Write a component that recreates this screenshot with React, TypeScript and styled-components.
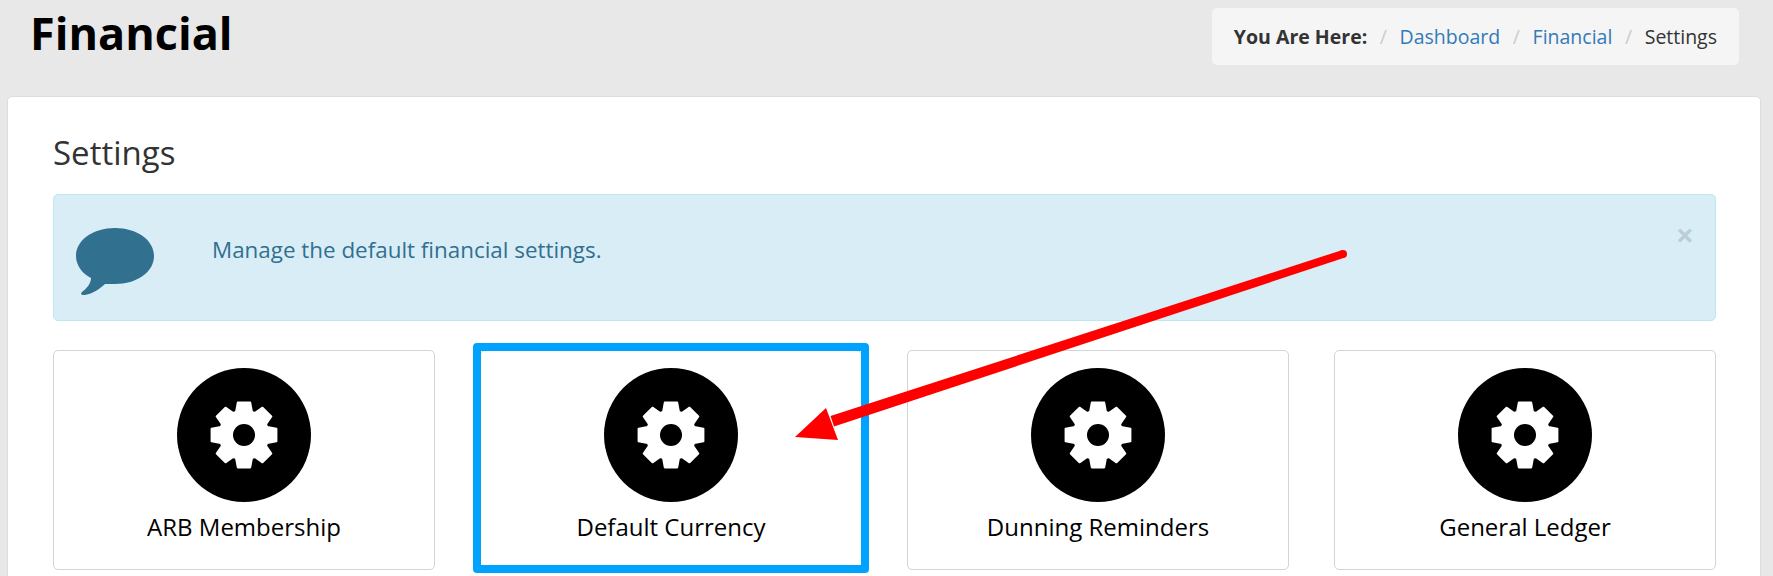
import React from 'react'
import styled, { createGlobalStyle } from 'styled-components'

const GlobalStyle = createGlobalStyle`
  html, body {
    margin: 0;
    height: 100%;
    overflow: hidden;
    background: #e8e8e8;
    font-family: "Open Sans", "Liberation Sans", sans-serif;
  }
  * { box-sizing: border-box; }
`

const Page = styled.div`
  position: relative;
  width: 1773px;
  height: 576px;
  overflow: hidden;
  padding: 8px 34px 0 7px;
`

const Header = styled.header`
  display: flex;
  justify-content: space-between;
  align-items: flex-start;
  height: 88px;
`

const PageTitle = styled.h1`
  margin: 0;
  padding-left: 23px;
  color: #000;
  font-size: 45px;
  font-weight: 700;
  line-height: 50px;
`

const Breadcrumb = styled.nav`
  display: flex;
  align-items: center;
  height: 57px;
  padding: 0 22px;
  background: #f5f5f5;
  border-radius: 5px;
  font-size: 19.5px;
  color: #333;
`

const CrumbLabel = styled.strong`
  font-weight: 700;
`

const CrumbLink = styled.a`
  color: #337ab7;
  text-decoration: none;
`

const CrumbDivider = styled.span`
  padding: 0 12.6px;
  color: #ccc;
`

const Panel = styled.main`
  height: 560px;
  margin-right: -22px;
  padding: 36px 44px 0 45px;
  background: #fff;
  border: 1px solid #ddd;
  border-radius: 5px;
`

const PanelTitle = styled.h2`
  margin: 0 0 21px;
  color: #333;
  font-size: 33px;
  font-weight: 400;
  line-height: 40px;
`

const Alert = styled.div`
  display: flex;
  align-items: flex-start;
  height: 127px;
  margin-bottom: 29px;
  padding: 33px 21px 0 21px;
  color: #31708f;
  background: #d9edf7;
  border: 1px solid #bce8f1;
  border-radius: 5px;
`

const AlertText = styled.p`
  margin: 7px 0 0 57px;
  font-size: 22.4px;
  line-height: 29px;
`

const CloseButton = styled.span`
  margin-left: auto;
  margin-top: -5px;
  color: #000;
  opacity: 0.13;
  font-size: 32px;
  font-weight: 700;
  line-height: 24px;
`

const CardGrid = styled.div`
  display: grid;
  grid-template-columns: repeat(4, 382px);
  justify-content: space-between;
`

const Card = styled.a<{ $highlighted?: boolean }>`
  position: relative;
  display: flex;
  flex-direction: column;
  align-items: center;
  height: 220px;
  padding-top: 17px;
  color: #000;
  background: #fff;
  border: 1px solid #d4d4d4;
  border-radius: 5px;
  font-size: 24px;
  line-height: 30px;

  ${(props) =>
    props.$highlighted &&
    `
    &::after {
      content: '';
      position: absolute;
      inset: -8px -8px -4px -8px;
      border: 8px solid #00a2ff;
      border-radius: 4px;
    }
  `}
`

const IconCircle = styled.span`
  display: flex;
  align-items: center;
  justify-content: center;
  width: 134px;
  height: 134px;
  margin-bottom: 10px;
  background: #000;
  border-radius: 50%;
`

const ArrowLayer = styled.svg`
  position: absolute;
  top: 0;
  left: 0;
  pointer-events: none;
`

// 8 teeth, tapered from the root circle out to the tip
const gearPath = () => {
  const points: string[] = []
  for (let i = 0; i < 8; i++) {
    const angle = (i * Math.PI) / 4 - Math.PI / 2
    const corners: [number, number][] = [
      [24.5, -0.33],
      [33, -0.19],
      [33, 0.19],
      [24.5, 0.33],
    ]
    corners.forEach(([radius, offset]) => {
      const x = 35 + radius * Math.cos(angle + offset)
      const y = 35 + radius * Math.sin(angle + offset)
      points.push(`${x.toFixed(2)} ${y.toFixed(2)}`)
    })
  }
  return `M${points.join('L')}Z`
}

const GearIcon = () => (
  <svg width="70" height="70" viewBox="0 0 70 70">
    <path
      d={gearPath()}
      fill="#fff"
      stroke="#fff"
      strokeWidth="2"
      strokeLinejoin="round"
    />
    <circle cx="35" cy="35" r="11" fill="#000" />
  </svg>
)

const BubbleIcon = () => (
  <svg width="80" height="68" viewBox="0 0 80 68" style={{ flexShrink: 0 }}>
    <path
      d="M40 0C18 0 1 12 1 28C1 38 8 46 16 50C16 56 11 61 7 64C5 66 7 67.5 10 67C18 65.5 24 61.5 30 56C33 56 37 56 40 56C62 56 79 44 79 28C79 12 62 0 40 0Z"
      fill="#31708f"
    />
  </svg>
)

const cards = [
  { label: 'ARB Membership' },
  { label: 'Default Currency', highlighted: true },
  { label: 'Dunning Reminders' },
  { label: 'General Ledger' },
]

export default function App() {
  return (
    <Page>
      <GlobalStyle />
      <Header>
        <PageTitle>Financial</PageTitle>
        <Breadcrumb>
          <CrumbLabel>You Are Here:</CrumbLabel>
          <CrumbDivider>/</CrumbDivider>
          <CrumbLink href="#">Dashboard</CrumbLink>
          <CrumbDivider>/</CrumbDivider>
          <CrumbLink href="#">Financial</CrumbLink>
          <CrumbDivider>/</CrumbDivider>
          <span>Settings</span>
        </Breadcrumb>
      </Header>
      <Panel>
        <PanelTitle>Settings</PanelTitle>
        <Alert>
          <BubbleIcon />
          <AlertText>Manage the default financial settings.</AlertText>
          <CloseButton>×</CloseButton>
        </Alert>
        <CardGrid>
          {cards.map((card) => (
            <Card key={card.label} $highlighted={card.highlighted}>
              <IconCircle>
                <GearIcon />
              </IconCircle>
              {card.label}
            </Card>
          ))}
        </CardGrid>
      </Panel>
      <ArrowLayer width="1773" height="576" viewBox="0 0 1773 576">
        <path d="M1341.7 250.2L1344.3 257.8L834 426.5L830.5 416Z" fill="#f00" />
        <circle cx="1343" cy="254" r="4" fill="#f00" />
        <path d="M795 437L826 408L838 440Z" fill="#f00" />
      </ArrowLayer>
    </Page>
  )
}
